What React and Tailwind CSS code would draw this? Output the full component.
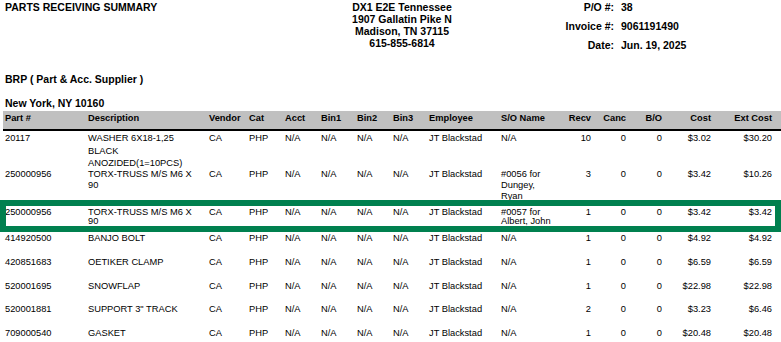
const cols = "grid grid-cols-[83px_121px_40px_36px_36px_36px_36px_36px_72px_65px_25px_35px_36px_49px_61px]";

const rows = [
    { part: "20117", desc: ["WASHER 6X18-1,25", "BLACK", "ANOZIDED(1=10PCS)"], so: ["N/A"], recv: "10", cost: "$3.02", ext: "$30.20", h: "h-[37px] leading-[12.5px]" },
    { part: "250000956", desc: ["TORX-TRUSS M/S M6 X", "90"], so: ["#0056 for", "Dungey,", "Ryan"], recv: "3", cost: "$3.42", ext: "$10.26", h: "h-[35px] leading-[11px]" },
    { part: "250000956", desc: ["TORX-TRUSS M/S M6 X", "90"], so: ["#0057 for", "Albert, John"], recv: "1", cost: "$3.42", ext: "$3.42", h: "h-[28px] pt-[4px] leading-[9px]" },
    { part: "414920500", desc: ["BANJO BOLT"], so: ["N/A"], recv: "1", cost: "$4.92", ext: "$4.92", h: "h-[24px] leading-[12px]" },
    { part: "420851683", desc: ["OETIKER CLAMP"], so: ["N/A"], recv: "1", cost: "$6.59", ext: "$6.59", h: "h-[23.5px] leading-[12px]" },
    { part: "520001695", desc: ["SNOWFLAP"], so: ["N/A"], recv: "1", cost: "$22.98", ext: "$22.98", h: "h-[23.75px] leading-[12px]" },
    { part: "520001881", desc: ["SUPPORT 3\" TRACK"], so: ["N/A"], recv: "2", cost: "$3.23", ext: "$6.46", h: "h-[23.75px] leading-[12px]" },
    { part: "709000540", desc: ["GASKET"], so: ["N/A"], recv: "1", cost: "$20.48", ext: "$20.48", h: "h-[23.75px] leading-[12px]" },
]

const Lines = ({ lines }) => (
    <div>
        {lines.map((l, i) => (
            <div key={i} className="whitespace-nowrap">{l}</div>
        ))}
    </div>
)

const Row = ({ r }) => (
    <div className={`${cols} ${r.h} text-[9.3px]`}>
        <div>{r.part}</div>
        <Lines lines={r.desc} />
        <div>CA</div>
        <div>PHP</div>
        <div>N/A</div>
        <div>N/A</div>
        <div>N/A</div>
        <div>N/A</div>
        <div className="whitespace-nowrap">JT Blackstad</div>
        <Lines lines={r.so} />
        <div className="text-right">{r.recv}</div>
        <div className="text-right">0</div>
        <div className="text-right">0</div>
        <div className="text-right">{r.cost}</div>
        <div className="text-right">{r.ext}</div>
    </div>
)

export default function App() {
    return (
        <div className="relative w-[781px] bg-white text-black font-['Liberation_Sans',Arial,sans-serif]">
            <div className="h-[73px] flex items-start pt-[1px] text-[10.5px] leading-[12px] font-bold">
                <div className="w-[340px] pl-[5px]">PARTS RECEIVING SUMMARY</div>
                <div className="w-[124px] text-center whitespace-nowrap">
                    <div>DX1 E2E Tennessee</div>
                    <div>1907 Gallatin Pike N</div>
                    <div>Madison, TN 37115</div>
                    <div>615-855-6814</div>
                </div>
                <div className="w-[100px]" />
                <div className="grid grid-cols-[50px_auto] content-start gap-x-[7px] gap-y-[7px] whitespace-nowrap">
                    <div className="text-right">P/O #:</div>
                    <div>38</div>
                    <div className="text-right">Invoice #:</div>
                    <div>9061191490</div>
                    <div className="text-right">Date:</div>
                    <div>Jun. 19, 2025</div>
                </div>
            </div>
            <div className="pl-[5px] text-[10.5px] leading-[12px] font-bold">BRP ( Part &amp; Acc. Supplier )</div>
            <div className="pl-[5px] mt-[12px] text-[10.5px] leading-[12px] font-bold">New York, NY 10160</div>

            <div className="ml-[3px] mt-[2px]">
                <div className="bg-[#c0c0c0] border-b-2 border-black h-[20px] pl-[2px] pt-[1px]">
                    <div className={`${cols} text-[9.3px] leading-[12px] font-bold`}>
                        <div>Part #</div>
                        <div>Description</div>
                        <div>Vendor</div>
                        <div>Cat</div>
                        <div>Acct</div>
                        <div>Bin1</div>
                        <div>Bin2</div>
                        <div>Bin3</div>
                        <div>Employee</div>
                        <div className="whitespace-nowrap">S/O Name</div>
                        <div className="text-right">Recv</div>
                        <div className="text-right">Canc</div>
                        <div className="text-right">B/O</div>
                        <div className="text-right">Cost</div>
                        <div className="text-right whitespace-nowrap">Ext Cost</div>
                    </div>
                </div>
                <div className="pl-[2px] pt-[1px]">
                    {rows.map((r, i) => (
                        <Row key={i} r={r} />
                    ))}
                </div>
            </div>

            <div className="absolute left-0 top-[200px] w-[781px] h-[32px] border-[6px] border-[#00804f] pointer-events-none" />
        </div>
    )
}
